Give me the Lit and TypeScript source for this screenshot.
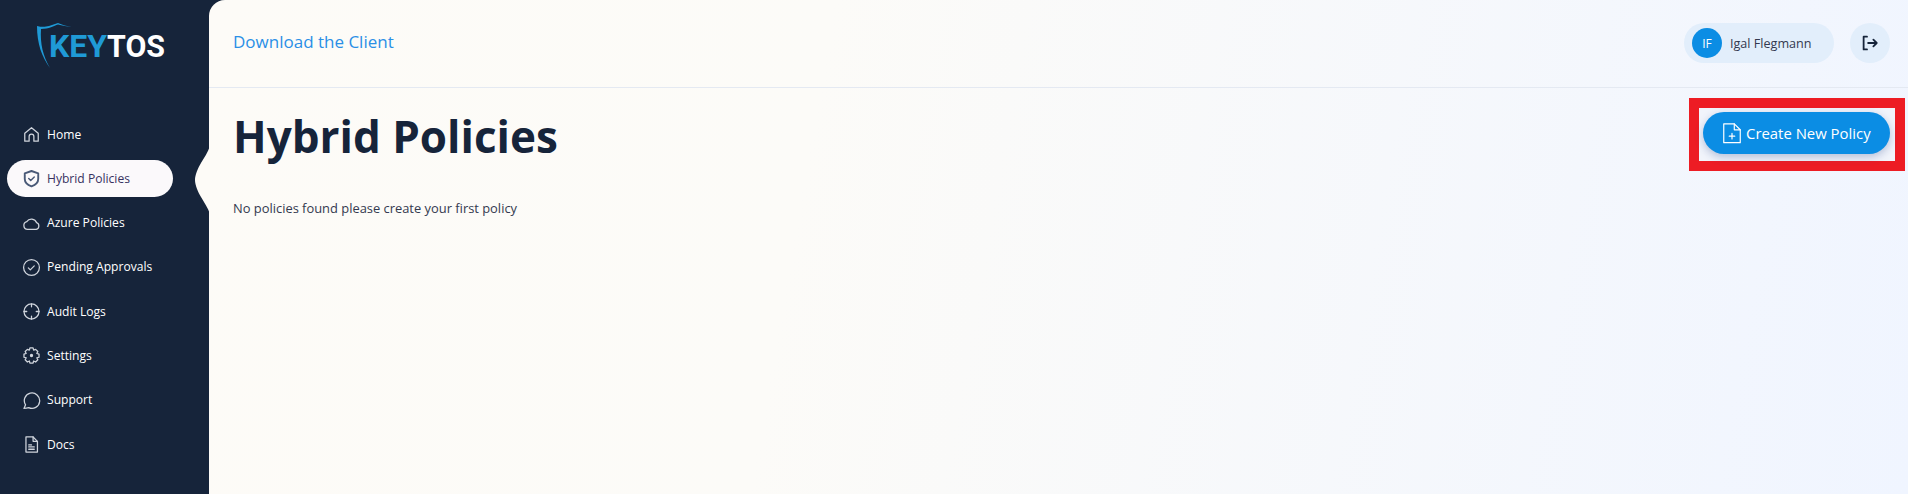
import { LitElement, html, css, svg } from "lit";
import { customElement } from "lit/decorators.js";

const s = (c: unknown) => html`<svg class="ic" viewBox="0 0 24 24" fill="none" stroke="currentColor" stroke-width="1.6" stroke-linecap="round" stroke-linejoin="round">${c}</svg>`;
const icons: Record<string, unknown> = {
  home: s(svg`<path d="M3.500 20.500V10.500L12 3.500l8.500 7v10h-5.500v-6a3 3 0 0 0-6 0v6z"/>`),
  shield: s(svg`<path d="M12 2.500l8.500 3v7c0 4.500-3.500 7.500-8.500 9.500-5-2-8.500-5-8.500-9.500v-7z" stroke-width="2.400"/><path d="M8.500 12l2.500 2.500 4.500-4.500" stroke-width="1.800"/>`),
  cloud: s(svg`<path d="M7 19.500a5 5 0 0 1-1-9.800 7 7 0 0 1 12.500 1.300 4.500 4.500 0 0 1-.5 8.500z"/>`),
  check: s(svg`<circle cx="12" cy="12" r="10"/><path d="M8 12.500l2.500 2.500 5-5"/>`),
  target: s(svg`<circle cx="12" cy="12" r="9.500"/><path d="M12 2.500v3.500M12 18v3.500M2.500 12H6M18 12h3.500"/>`),
  gear: s(svg`<path d="M10 2.500h4l.7 2.700 2.500-1 2.800 2.800-1.300 2.400 2.800.8v4l-2.800.7 1.300 2.500-2.800 2.800-2.500-1.300-.7 2.600h-4l-.7-2.600-2.500 1.300L4 17.400l1.300-2.500-2.800-.7v-4l2.800-.8L4 7l2.800-2.800 2.500 1z"/><circle cx="12" cy="12" r="1.300" fill="currentColor"/>`),
  chat: s(svg`<path d="M2.500 22l2-4.500a9.700 9.700 0 1 1 4 3.500c-2 .7-4 1-6 1z"/>`),
  doc: s(svg`<path d="M5 2.500h9l5.500 5.500v13.500H5z"/><path d="M14 2.500V8h5.500M8.500 12.500H12M8.500 15h7M8.500 18h7"/>`),
};

const NAV = [
  ["home", "Home"],
  ["shield", "Hybrid Policies"],
  ["cloud", "Azure Policies"],
  ["check", "Pending Approvals"],
  ["target", "Audit Logs"],
  ["gear", "Settings"],
  ["chat", "Support"],
  ["doc", "Docs"],
];

@customElement("app-root")
export class AppRoot extends LitElement {
  static styles = css`
    :host { display: block; width: 1908px; height: 494px; overflow: hidden; font-family: "Open Sans", "Noto Sans", sans-serif; color: #16243a; }
    * { box-sizing: border-box; }
    .app { display: flex; width: 1908px; height: 494px; background: #16243a; }
    .side { width: 209px; flex: none; display: flex; flex-direction: column; }
    .logo { height: 116px; padding: 24px 0 0 37px; display: flex; }
    .logo svg { display: block; overflow: visible; }
    .logo text { font-family: "Roboto", sans-serif; font-weight: 700; font-size: 32px; }
    nav { display: flex; flex-direction: column; gap: 7.300px; padding-left: 7px; }
    .item { width: 166px; height: 37px; border-radius: 19px; display: flex; align-items: center; gap: 6.500px; padding-left: 14.500px; color: #fff; font-size: 12.100px; padding-bottom: 1px; }
    .item.on { background: #fbf9fb; color: #37315f; }
    .ic { width: 19px; height: 19px; flex: none; display: block; color: #cfd4dc; margin-top: 1px; }
    .on .ic { color: #4a5a78; }
    .main { flex: 1; position: relative; border-top-left-radius: 16px; background: linear-gradient(100deg, #fdfbf7 0%, #fcfbf8 35%, #f0f5ff 100%); display: flex; flex-direction: column; }
    .notch { position: absolute; left: -15px; top: 140px; width: 16px; height: 80px; display: block; }
    header { height: 88px; flex: none; border-bottom: 1px solid #e4e9f2; display: flex; align-items: center; padding: 0 18px 1px 24px; }
    .dl { color: #2a8fe6; font-size: 17px; padding-bottom: 3px; }
    .user { margin-left: auto; height: 40px; width: 150px; border-radius: 20px; background: #e2eefb; display: flex; align-items: center; gap: 8px; padding-left: 8px; font-size: 12.600px; color: #33394f; }
    .av { width: 30px; height: 30px; border-radius: 50%; background: #0b8de4; color: #fff; display: flex; align-items: center; justify-content: center; font-size: 12px; }
    .out { margin-left: 16px; width: 40px; height: 40px; border-radius: 50%; background: #e2eefb; display: flex; align-items: center; justify-content: center; color: #16243a; }
    .out svg { width: 18px; height: 18px; }
    .body { flex: 1; display: flex; padding: 10px 3px 0 24px; align-items: flex-start; }
    .left { flex: 1; padding-top: 6px; }
    h1 { margin: 0; font-size: 44px; line-height: 64px; font-weight: 700; color: #16243a; }
    p { margin: 31px 0 0; font-size: 12.900px; line-height: 18px; color: #33394f; }
    .mark { border: 10px solid #ed1c24; background: #f1f4fb; width: 216px; height: 73px; padding: 4px 5px 7px 4px; flex: none; }
    .btn { width: 187px; height: 42px; border-radius: 21px; background: #0b8de4; color: #fff; display: flex; align-items: center; gap: 3px; font-size: 14.900px; box-shadow: 0 3px 8px rgba(40,70,140,.3); border: 0; font-family: inherit; padding: 0 0 1px 18px; }
    .btn svg { width: 22px; height: 22px; flex: none; }
  `;

  render() {
    return html`<div class="app">
      <aside class="side">
        <div class="logo">
          <svg width="134" height="48" viewBox="0 0 134 48">
            <path d="M0 2C4 3 7 3 9 2.500C13 2 17 0 21 -1C25 1 30 2 35 3C30 2.500 25 1.500 21 .5C17 2 12 5 4 5C3 20 6 32 13 44C5 33 0 20 0 2z" fill="#1f9ad6"/>
            <text x="12" y="33" fill="#1f9ad6" textLength="58" lengthAdjust="spacingAndGlyphs">KEY</text>
            <text x="70" y="33" fill="#fff" textLength="58" lengthAdjust="spacingAndGlyphs">TOS</text>
          </svg>
        </div>
        <nav>
          ${NAV.map(([i, t]) => html`<div class="item ${t === "Hybrid Policies" ? "on" : ""}">${icons[i]}<span>${t}</span></div>`)}
        </nav>
      </aside>
      <main class="main">
        <svg class="notch" viewBox="0 0 16 80"><path d="M16 6C14 12 10 18 7 23C4 28 1 35 1 40C1 45 4 52 7 57C10 62 14 68 16 74z" fill="#fdfbf7"/></svg>
        <header>
          <span class="dl">Download the Client</span>
          <div class="user"><span class="av">IF</span><span>Igal Flegmann</span></div>
          <div class="out"><svg viewBox="0 0 24 24" fill="none" stroke="currentColor" stroke-width="2.400" stroke-linecap="round" stroke-linejoin="round"><path d="M8 3.500H3.500v17H8M9.500 12H21M16.500 7.500L21 12l-4.500 4.500"/></svg></div>
        </header>
        <div class="body">
          <div class="left">
            <h1>Hybrid Policies</h1>
            <p>No policies found please create your first policy</p>
          </div>
          <div class="mark">
            <button class="btn"><svg viewBox="0 0 24 24" fill="none" stroke="currentColor" stroke-width="1.300" stroke-linecap="round" stroke-linejoin="round"><path d="M3 2h11.500L21 8.500V22.500H3z"/><path d="M14.500 2v6.500H21M12 12.500v6M9 15.500h6"/></svg><span>Create New Policy</span></button>
          </div>
        </div>
      </main>
    </div>`;
  }
}
